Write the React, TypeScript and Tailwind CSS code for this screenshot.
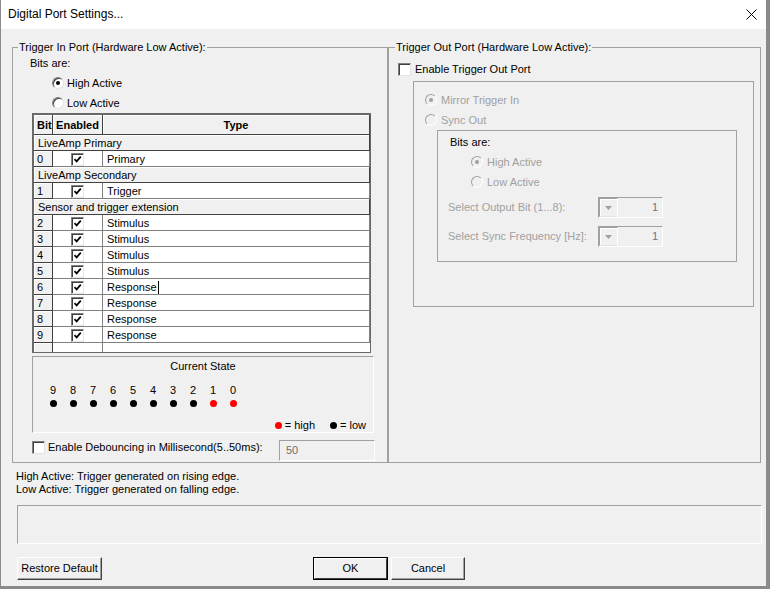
import React from "react";

const FONT = "font-['Liberation_Sans',Arial,sans-serif]";
const RAISED = "bg-[#f0f0f0] border-r border-b border-[#404040] shadow-[inset_1px_1px_0_#fff]";

const Check = ({ checked = false, className = "" }: { checked?: boolean; className?: string }) => (
	<span
		className={`flex w-[13px] h-[13px] shrink-0 items-center justify-center bg-white border border-t-[#808080] border-l-[#808080] border-r-[#e3e3e3] border-b-[#e3e3e3] shadow-[inset_1px_1px_0_#404040] ${className}`}
	>
		{checked && (
			<svg width="9" height="9" viewBox="0 0 9 9">
				<path d="M1.5 4.2 L3.6 6.4 L7.8 1.6" fill="none" stroke="#000" strokeWidth="1.7" />
			</svg>
		)}
	</span>
);

const Radio = ({ checked = false, disabled = false }: { checked?: boolean; disabled?: boolean }) => (
	<span
		className={`flex w-[12px] h-[12px] shrink-0 rounded-full items-center justify-center border ${
			disabled
				? "bg-[#f0f0f0] border-t-[#a0a0a0] border-l-[#a0a0a0] border-r-white border-b-white"
				: "bg-white border-t-[#808080] border-l-[#808080] border-r-[#e3e3e3] border-b-[#e3e3e3] shadow-[inset_1px_1px_0_#404040]"
		}`}
	>
		{checked && <span className={`w-[4px] h-[4px] rounded-full ${disabled ? "bg-[#a0a0a0]" : "bg-black"}`} />}
	</span>
);

const Combo = ({ value }: { value: string }) => (
	<div className="flex w-[65px] h-[21px] border border-t-[#a0a0a0] border-l-[#a0a0a0] border-r-white border-b-white bg-[#f0f0f0]">
		<div className="flex w-[19px] items-center justify-center border border-t-[#a0a0a0] border-l-[#a0a0a0] border-r-white border-b-[#e3e3e3] shadow-[inset_1px_1px_0_#fff]">
			<svg width="7" height="4" viewBox="0 0 7 4">
				<path d="M0 0 L7 0 L3.5 4 Z" fill="#a0a0a0" />
			</svg>
		</div>
		<div className="flex-1 text-right pr-[4px] leading-[19px] text-[#6a7390]">{value}</div>
	</div>
);

type Row = { group?: string; bit?: number; type?: string; caret?: boolean };

const rows: Row[] = [
	{ group: "LiveAmp Primary" },
	{ bit: 0, type: "Primary" },
	{ group: "LiveAmp Secondary" },
	{ bit: 1, type: "Trigger" },
	{ group: "Sensor and trigger extension" },
	{ bit: 2, type: "Stimulus" },
	{ bit: 3, type: "Stimulus" },
	{ bit: 4, type: "Stimulus" },
	{ bit: 5, type: "Stimulus" },
	{ bit: 6, type: "Response", caret: true },
	{ bit: 7, type: "Response" },
	{ bit: 8, type: "Response" },
	{ bit: 9, type: "Response" },
];

const BitGrid = () => (
	<div className="ml-[19px] w-[339px] h-[240px] overflow-hidden bg-white border-l-2 border-t-2 border-r border-b border-[#696969]">
		{/* header */}
		<div className="flex h-[20px] font-bold">
			<div className={`w-[19px] pl-[3px] leading-[20px] ${RAISED}`}>Bit</div>
			<div className={`w-[50px] text-center leading-[20px] ${RAISED}`}>Enabled</div>
			<div className={`flex-1 text-center leading-[20px] ${RAISED}`}>Type</div>
		</div>
		{rows.map((r, i) =>
			r.group ? (
				<div key={i} className={`h-[16px] pl-[4px] leading-[16px] ${RAISED}`}>
					{r.group}
				</div>
			) : (
				<div key={i} className="flex h-[16px] leading-[16px]">
					<div className={`w-[19px] pl-[3px] ${RAISED}`}>{r.bit}</div>
					<div className="flex w-[50px] items-center justify-center border-r border-b border-[#808080]">
						<Check checked className="mt-px" />
					</div>
					<div className="flex flex-1 items-center pl-[4px] pt-px border-r border-b border-[#808080]">
						{r.type}
						{r.caret && <span className="ml-px w-px h-[13px] bg-black" />}
					</div>
				</div>
			)
		)}
		<div className="flex h-[16px]">
			<div className={`w-[19px] ${RAISED}`} />
			<div className="w-[50px] border-r border-[#808080]" />
			<div className="flex-1" />
		</div>
	</div>
);

const CurrentState = () => {
	const bits = [9, 8, 7, 6, 5, 4, 3, 2, 1, 0];
	return (
		<div className="ml-[19px] mt-[3px] w-[342px] h-[77px] flex flex-col border border-t-[#a0a0a0] border-l-[#a0a0a0] border-r-white border-b-white">
			<div className="mt-[3px] text-center">Current State</div>
			<div className="mt-[11px] ml-[10px] flex">
				{bits.map((b) => (
					<div key={b} className="w-[20px] text-center">
						{b}
					</div>
				))}
			</div>
			<div className="mt-[3px] ml-[10px] flex">
				{bits.map((b) => (
					<div key={b} className="w-[20px] flex justify-center">
						<span className={`w-[7px] h-[7px] rounded-full ${b < 2 ? "bg-[#ff0000]" : "bg-black"}`} />
					</div>
				))}
			</div>
			<div className="mt-[12px] flex items-center justify-end pr-[7px]">
				<span className="w-[7px] h-[7px] rounded-full bg-[#ff0000]" />
				<span className="ml-[3px]">= high</span>
				<span className="ml-[15px] w-[7px] h-[7px] rounded-full bg-black" />
				<span className="ml-[3px]">= low</span>
			</div>
		</div>
	);
};

const WinButton = ({ label, width, isDefault = false }: { label: string; width: string; isDefault?: boolean }) => (
	<button
		className={`${width} h-[23px] bg-[#f0f0f0] ${
			isDefault ? "border border-black" : "border border-t-white border-l-white border-r-[#404040] border-b-[#404040]"
		}`}
	>
		<span
			className={`flex h-full items-center justify-center ${
				isDefault ? "border border-t-white border-l-white border-r-[#404040] border-b-[#404040]" : "shadow-[inset_-1px_-1px_0_#a0a0a0]"
			}`}
		>
			{label}
		</span>
	</button>
);

export default function App() {
	return (
		<div
			className={`w-[770px] h-[589px] overflow-hidden flex flex-col bg-[#f0f0f0] text-black text-[11px] leading-[13px] border-l border-l-[#8c8c8c] border-r-4 border-r-[#8a8a8a] border-b-3 border-b-[#8a8a8a] ${FONT}`}
		>
			{/* Title bar */}
			<div className="h-[29px] shrink-0 bg-white flex items-center justify-between pl-[7px] pr-[9px] text-[12px]">
				<span>Digital Port Settings...</span>
				<svg width="11" height="11" viewBox="0 0 11 11">
					<path d="M0.5 0.5 L10.5 10.5 M10.5 0.5 L0.5 10.5" stroke="#000" strokeWidth="1" />
				</svg>
			</div>

			{/* Groups */}
			<div className="flex pl-[11px] pt-[18px]">
				{/* Trigger In */}
				<div className="w-[376px] h-[416px] flex flex-col border border-[#a0a0a0]">
					<div className="-mt-[7px] ml-[5px] px-[1px] w-fit bg-[#f0f0f0]">Trigger In Port (Hardware Low Active):</div>
					<div className="mt-[3px] ml-[17px]">Bits are:</div>
					<div className="mt-[3px] ml-[39px] h-[20px] flex items-center gap-[3px]">
						<Radio checked />
						<span>High Active</span>
					</div>
					<div className="ml-[39px] h-[20px] flex items-center gap-[3px]">
						<Radio />
						<span>Low Active</span>
					</div>
					<BitGrid />
					<CurrentState />
					<div className="mt-[7px] flex items-start">
						<Check className="ml-[19px] mt-[1px]" />
						<span className="ml-[3px] mt-[1px]">Enable Debouncing in Millisecond(5..50ms):</span>
						<div className="ml-auto mr-[12px] w-[96px] h-[21px] pl-[6px] leading-[19px] text-[#6d6d6d] border border-t-[#a0a0a0] border-l-[#a0a0a0] border-r-white border-b-white">
							50
						</div>
					</div>
				</div>

				{/* Trigger Out */}
				<div className="w-[373px] h-[416px] flex flex-col border border-[#a0a0a0]">
					<div className="-mt-[7px] ml-[6px] px-[1px] w-fit bg-[#f0f0f0]">Trigger Out Port (Hardware Low Active):</div>
					<div className="mt-[9px] ml-[9px] flex items-center gap-[4px]">
						<Check />
						<span>Enable Trigger Out Port</span>
					</div>
					<div className="mt-[5px] ml-[24px] w-[341px] h-[226px] flex flex-col border border-[#a0a0a0] text-[#a0a0a0]">
						<div className="mt-[8px] ml-[11px] h-[20px] flex items-center gap-[4px]">
							<Radio checked disabled />
							<span>Mirror Trigger In</span>
						</div>
						<div className="ml-[11px] h-[20px] flex items-center gap-[4px]">
							<Radio disabled />
							<span>Sync Out</span>
						</div>
						<div className="ml-[23px] w-[300px] h-[132px] flex flex-col border border-[#a0a0a0]">
							<div className="mt-[5px] ml-[12px] text-black">Bits are:</div>
							<div className="mt-[3px] ml-[33px] h-[20px] flex items-center gap-[4px]">
								<Radio checked disabled />
								<span>High Active</span>
							</div>
							<div className="ml-[33px] h-[20px] flex items-center gap-[4px]">
								<Radio disabled />
								<span>Low Active</span>
							</div>
							<div className="mt-[5px] ml-[10px] flex items-center">
								<span className="w-[150px]">Select Output Bit (1...8):</span>
								<Combo value="1" />
							</div>
							<div className="mt-[8px] ml-[10px] flex items-center">
								<span className="w-[150px]">Select Sync Frequency [Hz]:</span>
								<Combo value="1" />
							</div>
						</div>
					</div>
				</div>
			</div>

			{/* Help text */}
			<div className="mt-[7px] ml-[15px]">High Active: Trigger generated on rising edge.</div>
			<div className="ml-[15px]">Low Active: Trigger generated on falling edge.</div>

			{/* Message box */}
			<div className="mt-[9px] ml-[16px] w-[745px] h-[39px] border border-t-[#a0a0a0] border-l-[#a0a0a0] border-r-white border-b-white" />

			{/* Buttons */}
			<div className="mt-[13px] ml-[16px] flex">
				<WinButton label="Restore Default" width="w-[85px]" />
				<div className="ml-[211px] flex gap-[3px]">
					<WinButton label="OK" width="w-[75px]" isDefault />
					<WinButton label="Cancel" width="w-[74px]" />
				</div>
			</div>
		</div>
	);
}
